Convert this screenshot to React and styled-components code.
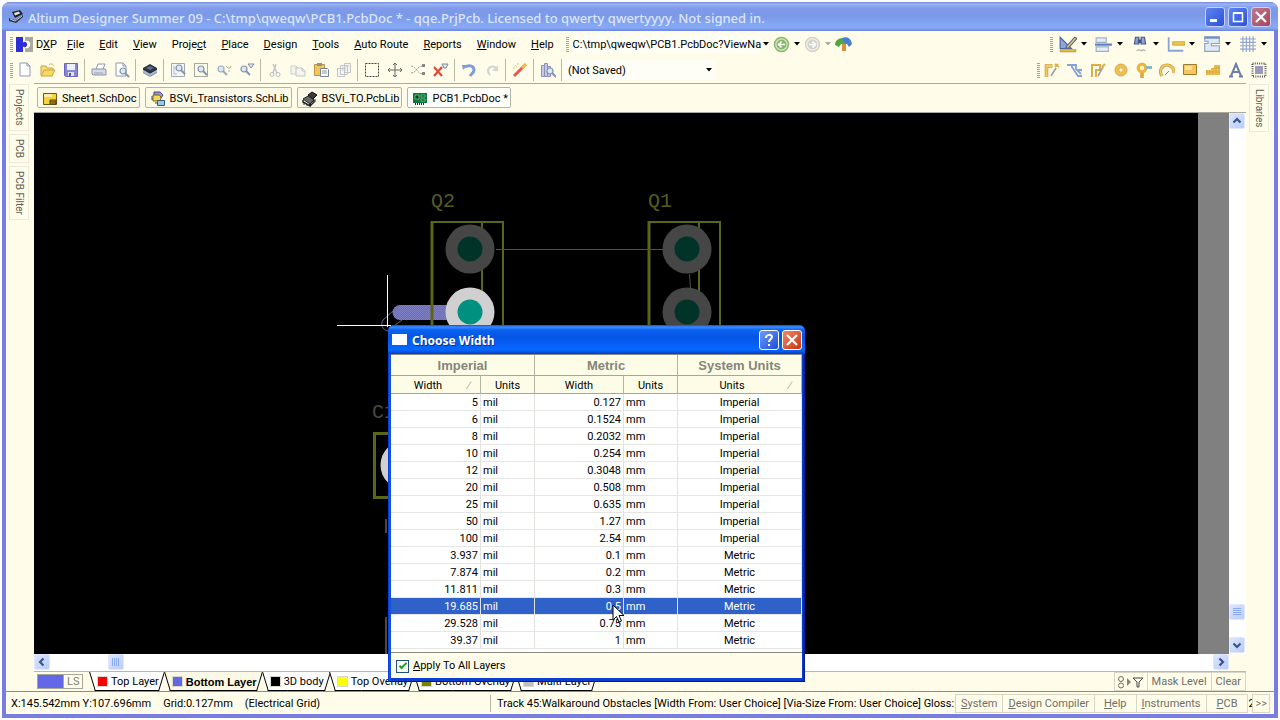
import React from "react";
import styled, { createGlobalStyle } from "styled-components";

const UI = `Roboto, "Liberation Sans", sans-serif`;
const BOLD = `"Liberation Sans", Arial, sans-serif`;
const TITLE = `"Noto Sans", "Open Sans", sans-serif`;

const Global = createGlobalStyle`
  *, *::before, *::after { box-sizing: border-box; }
  html, body { margin: 0; background: #fff; }
  body { font: 11px/14px ${UI}; color: #000; overflow: hidden; }
  button, input, select { font: inherit; color: inherit; margin: 0; padding: 0; border: 0; background: none; border-radius: 0; }
  svg { display: block; flex: none; }
`;

/* ---------- shell ---------- */
const Shell = styled.div`
  min-height: 100vh;
  padding: 2px;
  display: flex;
  flex-direction: column;
  position: relative;
`;
const Frame = styled.div`
  flex: 1;
  display: flex;
  flex-direction: column;
  background: #7a7de0;
  border-radius: 8px 8px 0 0;
  padding: 0 4px 4px;
  overflow: hidden;
`;
const TitleBar = styled.header`
  height: 29px;
  margin: 0 -4px;
  padding: 0 7px 0 6px;
  display: flex;
  align-items: center;
  gap: 4px;
  background: linear-gradient(#6f86d6 0, #9cb4f4 2px, #7f9bea 6px, #7b99e8 14px, #84a6f4 22px, #86a9f6 26px, #6c82d8 29px);
  color: #dce6fa;
`;
const TitleText = styled.h1`
  margin: 0;
  flex: 1;
  padding-top: 2px;
  font: 500 13px/18px ${TITLE};
  white-space: nowrap;
`;
const CaptionButton = styled.button`
  width: 20px;
  height: 20px;
  border: 1px solid ${(p) => (p.$bright ? "#fff" : "#c6d2f8")};
  border-radius: 3px;
  background: ${(p) => p.$bg};
  display: grid;
  place-items: center;
`;
const Caption = styled.div`
  display: flex;
  gap: 3px;
`;
const Body = styled.div`
  flex: 1;
  display: flex;
  flex-direction: column;
  background: #fffde9;
  min-height: 0;
`;

/* ---------- bars ---------- */
const Bar = styled.div`
  height: 26px;
  display: flex;
  align-items: center;
  padding: 0 ${(p) => p.$end}px 0 4px;
`;
const Handle = styled.span`
  width: 3px;
  height: 15px;
  flex: none;
  background: repeating-linear-gradient(#a5a596 0 1px, transparent 1px 2px);
`;
const Spacer = styled.span`
  flex: 1;
`;
const DxpMark = styled.span`
  margin-left: 3px;
`;
const MenuItem = styled.button`
  padding: 2px 8px 0 7px;
  height: 20px;
  white-space: nowrap;
  &:first-of-type { padding: 2px 3px 0 3px; }
`;
const Address = styled.input`
  width: 188px;
  height: 18px;
  margin-left: 4px;
  padding-top: 1px;
  background: #fffef4;
`;
const IconButton = styled.button`
  width: 23px;
  height: 22px;
  display: grid;
  place-items: center;
`;
const NavButton = styled(IconButton)`
  width: ${(p) => (p.$arrow ? "11px" : "20px")};
`;
const DropButton = styled.button`
  width: 36px;
  height: 22px;
  display: flex;
  align-items: center;
  justify-content: space-between;
  padding: 0 5px 0 3px;
`;
const Sep = styled.span`
  width: 1px;
  height: 22px;
  margin: 0 2px;
  background: #b9b9a8;
`;
const Combo = styled.label`
  display: flex;
  align-items: center;
  width: 152px;
  height: 20px;
  padding-right: 4px;
  background: #fffef6;
`;
const Select = styled.select`
  appearance: none;
  flex: 1;
  height: 20px;
  padding: 2px 0 0 4px;
  outline: none;
`;
const Hidden = styled.span`
  position: absolute;
  width: 1px;
  height: 1px;
  overflow: hidden;
  clip-path: inset(50%);
`;

/* ---------- workspace ---------- */
const Work = styled.div`
  flex: 1;
  display: flex;
  min-height: 0;
`;
const Side = styled.nav`
  width: 28px;
  flex: none;
  padding: 1px 0 0 3px;
  display: flex;
  flex-direction: column;
  align-items: flex-start;
  gap: 3px;
`;
const SideTab = styled.button`
  writing-mode: vertical-rl;
  width: 20px;
  padding: 4px 0;
  border: 1px solid #eceadb;
  color: #5f5f5a;
  font: 10px/18px ${UI};
`;
const Center = styled.div`
  flex: 1;
  min-width: 0;
  display: flex;
  flex-direction: column;
  border-top: 1px solid #a9a99c;
`;
const DocTabs = styled.div`
  height: 29px;
  padding: 3px 3px 4px;
  display: flex;
  gap: 5px;
  border-bottom: 1px solid #a9a99c;
`;
const DocTab = styled.button`
  display: flex;
  align-items: center;
  gap: 4px;
  padding: 2px 2px 0 4px;
  border: 1px solid #b4b4a4;
  border-radius: 2px;
  background: ${(p) => (p.$active ? "#fffffb" : "#fcfae6")};
  white-space: nowrap;
`;
const ViewRow = styled.div`
  flex: 1;
  display: flex;
  min-height: 0;
`;
const Canvas = styled.div`
  flex: 1;
  position: relative;
  overflow: hidden;
  background: #000;
  border-right: 31px solid #808080;
`;
const Drawing = styled.svg`
  position: absolute;
  inset: 0;
  width: 100%;
  height: 100%;
`;
const VScroll = styled.div`
  width: 17px;
  padding-bottom: 1px;
  background: #fff;
  display: flex;
  flex-direction: column;
`;
const HScroll = styled.div`
  height: 17px;
  margin-right: 17px;
  background: #fff;
  display: flex;
`;
const ScrollButton = styled.button`
  width: 16px;
  height: 16px;
  flex: none;
  border: 1px solid #dfe8fb;
  border-radius: 2px;
  background: linear-gradient(135deg, #dbe6ff, #b9cdf9);
  display: grid;
  place-items: center;
`;
const Gap = styled.span`
  flex: ${(p) => p.$grow || "none"};
  flex-basis: ${(p) => p.$size || "0px"};
`;

/* ---------- layer strip ---------- */
const LayerStrip = styled.div`
  height: 20px;
  display: flex;
  align-items: flex-start;
  padding-left: 3px;
  border-top: 1px solid #aebaba;
`;
const LayerSet = styled.button`
  display: flex;
  width: 46px;
  height: 15px;
  margin: 2px 9px 0 0;
  border: 1px solid #a8a898;
  color: #808078;
  line-height: 14px;
`;
const SetColor = styled.span`
  width: 26px;
  height: 13px;
  background: #6268e6;
  border-right: 1px solid #a8a898;
  margin-right: 3px;
`;
const LayerTab = styled.button`
  position: relative;
  height: 19px;
  display: flex;
  align-items: center;
  gap: 4px;
  padding: 0 4px 0 6px;
  margin-right: 4px;
  white-space: nowrap;
  font: ${(p) => (p.$active ? `700 11px/14px ${BOLD}` : "inherit")};
  &::before, &::after {
    content: "";
    position: absolute;
    top: 0;
    bottom: 0;
    background: ${(p) => (p.$active ? "#fbf9e6" : "#fff")};
    border-bottom: 1px solid #000;
  }
  &::before { left: 0; right: 50%; border-left: 1px solid #000; transform: skewX(17deg); }
  &::after { right: 0; left: 40%; border-right: 1px solid #000; transform: skewX(-17deg); }
`;
const Swatch = styled.span`
  position: relative;
  z-index: 1;
  width: 9px;
  height: 9px;
  background: ${(p) => p.$c};
  outline: 1px solid #d8d8cc;
`;
const TabLabel = styled.span`
  position: relative;
  z-index: 1;
`;
const MaskGroup = styled.div`
  display: flex;
  height: 19px;
`;
const FlatButton = styled.button`
  height: 19px;
  padding: 1px ${(p) => p.$pad || 4}px 0;
  border: 1px solid #d9d7c4;
  margin-left: -1px;
  color: #6f6f68;
  white-space: nowrap;
  display: flex;
  align-items: center;
`;

/* ---------- status ---------- */
const Status = styled.footer`
  height: 23px;
  border-top: 1px solid #8c8c82;
  display: flex;
  align-items: center;
  padding: 1px 4px 0 5px;
  white-space: nowrap;
`;
const StatusLeft = styled.div`
  width: 480px;
  height: 17px;
  line-height: 17px;
  display: flex;
  gap: 12px;
  border-right: 1px solid #b4b4a4;
`;
const StatusText = styled.div`
  flex: 1;
  min-width: 0;
  padding-left: 6px;
  overflow: hidden;
`;
const Sliver = styled.span`
  width: 5px;
  overflow: hidden;
`;

/* ---------- dialog ---------- */
const Dialog = styled.section`
  position: absolute;
  z-index: 2;
  left: 388px;
  top: 325px;
  width: 417px;
  padding: 0 3px 3px;
  border-radius: 6px 6px 0 0;
  background: linear-gradient(90deg, #0831d9, #1660e8 2px, #0a3fd0 3px, #0a3fd0 calc(100% - 3px), #0b35c8 calc(100% - 2px), #00138c);
  border-bottom: 1px solid #00138c;
`;
const DialogBar = styled.div`
  height: 29px;
  margin: 0 -3px;
  padding: 0 3px 0 4px;
  border-radius: 6px 6px 0 0;
  display: flex;
  align-items: center;
  background: linear-gradient(#0a4fd8 0, #3c8cff 2px, #0a62f0 5px, #0455e4 12px, #0560f8 20px, #0668ff 25px, #023ec4 29px);
  color: #fff;
`;
const DialogIcon = styled.span`
  width: 15px;
  height: 11px;
  background: #fff;
  margin-right: 5px;
`;
const DialogTitle = styled.h2`
  margin: 0;
  flex: 1;
  padding-top: 2px;
  font: 700 12px/18px ${TITLE};
  text-shadow: 1px 1px 0 #0a2f90;
`;
const DialogBody = styled.div`
  background: #fffde9;
`;
const Grid = styled.table`
  width: 100%;
  table-layout: fixed;
  border-collapse: separate;
  border-spacing: 0;
  background: #fff;
  border: 1px solid #8a8a80;
  border-width: 1px 0;
  padding-bottom: 3px;
`;
const GroupHead = styled.th`
  height: 21px;
  padding: 0;
  background: #fdfce6;
  color: #85857a;
  font: 700 13px/19px ${BOLD};
  border-right: 1px solid #b4b4a6;
  border-bottom: 1px solid #a6a69a;
`;
const ColHead = styled.th`
  position: relative;
  height: 18px;
  padding: 2px ${(p) => (p.$sort ? "15px" : "0")} 0 0;
  background: #fdfce6;
  font-weight: 400;
  border-right: 1px solid #b4b4a6;
  border-bottom: 1px solid #a6a69a;
`;
const SortMark = styled.span`
  position: absolute;
  right: 10px;
  color: #a6a69a;
`;
const Row = styled.tr`
  background: ${(p) => (p.$on ? "#2f62c8" : "#fff")};
  color: ${(p) => (p.$on ? "#fff" : "#000")};
`;
const Cell = styled.td`
  height: 17px;
  padding: 2px 2px 0;
  line-height: 14px;
  text-align: ${(p) => p.$a};
  border-right: 1px solid #e2e2de;
  border-bottom: 1px solid #e6e6e2;
`;
const DialogFoot = styled.label`
  height: 25px;
  display: flex;
  align-items: center;
  padding: 1px 0 0 5px;
  gap: 4px;
`;
const Check = styled.input`
  appearance: none;
  width: 13px;
  height: 13px;
  border: 1px solid #1c5180;
  background: #fbfbf6;
  display: grid;
  place-items: center;
  &:checked::before {
    content: "";
    width: 8px;
    height: 4px;
    margin-top: -2px;
    border: solid #21a121;
    border-width: 0 0 2px 2px;
    transform: rotate(-45deg);
  }
`;
const Pointer = styled.svg`
  position: absolute;
  z-index: 3;
  left: 612px;
  top: 604px;
`;

/* ---------- icons ---------- */
const S = ({ children, w = 18, label }) => (
  <svg width={w} height={w} viewBox="0 0 16 16" fill="none" strokeWidth="1" aria-hidden={!label}>
    {children}
  </svg>
);
const Page = ({ x = 2, y = 1, w = 10, h = 13, f = "#fff", s = "#8d99b5" }) => (
  <path d={`M${x} ${y}h${w - 3}l3 3v${h - 3}h${-w}z M${x + w - 3} ${y}v3h3`} fill={f} stroke={s} />
);
const Lens = ({ x = 8, y = 7, r = 3, c = "#8494aa" }) => (
  <>
    <circle cx={x} cy={y} r={r} fill="#dbe9f4" stroke={c} strokeWidth="1.2" />
    <path d={`M${x + r - 1} ${y + r - 1}l4 4`} stroke={c} strokeWidth="2" />
  </>
);
const icons = {
  new: <Page x={3} />,
  open: (<><path d="M1 13V4h5l1 2h6v2" fill="#f7dd84" stroke="#c4a64a" /><path d="M1 14l3-6h11l-3 6z" fill="#f9d95e" stroke="#c4a64a" /><path d="M9 3c2-2 4-1 5 1" stroke="#c9b060" /></>),
  save: (<><path d="M1.5 1.5h13v13h-12l-1-1z" fill="#8a87d4" stroke="#6a66b8" /><path d="M4 2h8v6H4z" fill="#eef0fc" /><path d="M5 10h6v4H5z" fill="#dfe2f5" /><path d="M6 11h2v3H6z" fill="#5a56ae" /></>),
  print: (<><path d="M5 7l2-5h7l-2 5" fill="#fff" stroke="#8c94a6" /><path d="M1 7h13l1 1v5H2l-1-1z" fill="#d5dae4" stroke="#8a92a4" /><path d="M3 11h9" stroke="#9aa2b2" /></>),
  preview: (<><Page x={2} /><Lens x={9} y={9} /></>),
  layers: (<><path d="M1 9l7 4 7-4v2l-7 4-7-4z" fill="#7f93ac" /><path d="M1 6l7-4 7 4v2l-7 4-7-4z" fill="#2c3442" /><path d="M4 6l4-2 4 2-4 2z" fill="#5f7088" /><path d="M1 8v2l7 4 7-4V8l-7 4z" fill="#a3bad2" /></>),
  zoomDoc: (<><path d="M1.5 1.5h13v13h-13z" fill="#f4f6fa" stroke="#a0a8b6" /><Lens x={9} y={6} /><path d="M4 4v8h3" stroke="#b0b8c8" /></>),
  zoomArea: (<><path d="M1.5 1.5h13v13h-13z" stroke="#555" strokeDasharray="1 1" /><Lens x={8} y={7} /></>),
  zoomSel: (<><Lens x={5} y={7} c="#9aa9bf" /><path d="M12 6h2M12 9h2M10 4l2 2M15 4l-1 2" stroke="#a7b58b" /></>),
  zoomFilter: (<><Lens x={5} y={7} /><path d="M9 2h6l-3 4z" fill="#e9eef4" stroke="#7c8798" /></>),
  cut: (<><path d="M9 2L6 11M6 2l4 9" stroke="#bfc2c8" strokeWidth="1.4" /><circle cx="5" cy="12.5" r="2" stroke="#b7bac2" /><circle cx="11" cy="12.5" r="2" stroke="#b7bac2" /></>),
  copy: (<><Page x={1} y={4} w={8} h={8} f="#f6f5ec" s="#cccdcc" /><Page x={6} y={6} w={9} h={8} f="#f6f5ec" s="#c2c4c8" /></>),
  paste: (<><path d="M1.5 2.5h10v11h-10z" fill="#f1c75a" stroke="#b8954a" /><path d="M4 1h5v3H4z" fill="#8f8f96" /><path d="M7.5 6.5h7l1 1v7h-8z" fill="#fff" stroke="#7b8395" /><path d="M9 9h5M9 11h5" stroke="#8c94a6" /></>),
  rubber: (<><path d="M1.5 6.5h7v8h-7zM4.5 3.5h7v9h-7zM8.5 1.5h6v9h-6z" fill="#f6f5ec" stroke="#c2c4c8" /><path d="M6 6h4M6 8h4M10 4h3" stroke="#c4c7ce" /></>),
  select: <path d="M1.5 1.5h13v13h-13z" stroke="#444" strokeDasharray="2 1" />,
  move: <path d="M8 1v14M1 8h14M6 3l2-2 2 2M6 13l2 2 2-2M3 6L1 8l2 2M13 6l2 2-2 2" stroke="#666" />,
  deselect: (<><path d="M1 11c6 0 5-7 12-7M1 4c5 0 6 8 12 8" stroke="#999" strokeDasharray="2 1" /><path d="M12 2h3v3h-3zM12 10h3v3h-3z" fill="#888" /></>),
  clear: (<><path d="M1 5l8 9M9 5l-8 9" stroke="#e04a3c" strokeWidth="2.2" /><path d="M9 2h6l-2 4h-2z" fill="#dde5ee" stroke="#7c8798" /></>),
  undo: (<><path d="M1 3l6 0-5 5z" fill="#7f9cdc" /><path d="M4 5c3-2 9-2 9 3 0 3-3 4-4 6" stroke="#7f9cdc" strokeWidth="3" /></>),
  redo: (<><path d="M14 3v6H8z" fill="#d4d5d4" /><path d="M12 6C9 3 4 5 4 9c0 2 1 3 2 4" stroke="#cfd0d2" strokeWidth="2" /></>),
  wand: (<><path d="M2 14L11 5" stroke="#e8584a" strokeWidth="3" /><path d="M10 6l4-4" stroke="#f2b84e" strokeWidth="3.4" /><path d="M3 3l2 2M6 1v2M1 6h2" stroke="#e9c87c" /></>),
  browse: (<><path d="M1.5 3.5h3v11h-3zM4.5 1.5h3v13h-3zM7.5 4.5h3v10h-3z" fill="#c4c8e6" stroke="#8c92bc" /><Lens x={10} y={9} /></>),
  draft: (<><path d="M1 2l10 10H1z" fill="#8ba6dc" stroke="#4a68a8" /><path d="M6 11l8-9 2 1-8 9z" fill="#d8c9a0" stroke="#666" /><path d="M1 13h14v2H1z" fill="#edc04a" stroke="#a9842c" strokeWidth=".6" /></>),
  align: (<><path d="M1 2.5h9v4H1zM1 10.5h11v4H1z" fill="#e6edf7" stroke="#9db0cc" /><path d="M0 8.5h15" stroke="#5f82c0" strokeWidth="2" /></>),
  find: (<><path d="M3 8l1-6h3v6zM9 8V2h3l1 6z" fill="#8fa4d0" stroke="#40568a" /><path d="M6 4h3v3H6z" fill="#40568a" /><path d="M5 14l2-1 2 1 2-1 2 1" stroke="#b0b0a4" /></>),
  dim: (<><path d="M1.5 2v12h13" stroke="#8aa4d8" strokeWidth="1.6" /><path d="M5 6h11v3H5z" fill="#f2c84c" stroke="#b08a2c" strokeWidth=".6" /></>),
  room: (<><path d="M1.5 2.5h13v5h-7v2h7v5h-13v-7h3v-2h-3z" fill="#dfe8f5" stroke="#8aa2cc" /><path d="M1 2h14" stroke="#6f8fc8" strokeWidth="2" /></>),
  grid: <path d="M1 3.5h14M1 6.5h14M1 9.5h14M1 12.5h14M3.5 1v14M6.5 1v14M9.5 1v14M12.5 1v14" stroke="#8ea4d4" />,
  route: (<><path d="M2.5 15V4h6" stroke="#c79c3c" strokeWidth="3.6" /><path d="M2.5 15V4h6" stroke="#f5ca66" strokeWidth="2" /><path d="M7 14l5-8" stroke="#9aa0a8" strokeWidth="1.6" /><path d="M11 5l3-3M11 2l4 3" stroke="#e0b048" strokeWidth="2" /></>),
  diff: <path d="M0 3h9v4l5 5M5 3v2l6 9h4M9 8h6" stroke="#86a0d8" strokeWidth="1.8" />,
  multi: (<><path d="M2 15V3h8v5H6v7" stroke="#dcae4a" strokeWidth="2" /><path d="M8 14l5-9" stroke="#9aa0a8" strokeWidth="1.6" /><path d="M12 5l3-3" stroke="#e0b048" strokeWidth="2.4" /></>),
  pad: (<><circle cx="8" cy="8" r="4.2" fill="#fff8dc" stroke="#f2c04a" strokeWidth="3.4" /><circle cx="8" cy="8" r="6" stroke="#c79c3c" strokeWidth=".8" /><circle cx="8" cy="8" r="2.2" stroke="#c79c3c" strokeWidth=".8" /></>),
  via: (<><path d="M6 9v7" stroke="#d8a63c" strokeWidth="3.6" /><circle cx="6" cy="6" r="3.8" fill="#fff3c4" stroke="#eab63e" strokeWidth="3.2" /><path d="M10 4h6v3h-6z" fill="#8fb4c4" /></>),
  arc: (<><path d="M3 14C-2 6 7-1 14 6l1 5" stroke="#c79c3c" strokeWidth="3.2" /><path d="M3 14C-2 6 7-1 14 6l1 5" stroke="#f5ca66" strokeWidth="1.8" /><path d="M6 13l4-4" stroke="#8c8c80" /></>),
  fill: (<><path d="M1.5 2.5h13v10h-13z" fill="#f6c65a" stroke="#a07828" /><path d="M3 4h7v4H3z" fill="#fbe0a0" /></>),
  polygon: (<><path d="M1 13V8h5V6h3V3h6v10z" fill="#f2c050" /><path d="M2 8v5M5 8v5M8 6v7M11 3v10M14 3v10M1 10h14M8 6h7" stroke="#c79c3c" strokeWidth=".6" /></>),
  text: <path d="M3 14L8 2l5 12M5 10h6M1 14.5h4M11 14.5h4" stroke="#6c7ea8" strokeWidth="2" />,
  comp: (<><path d="M4 4h8v8H4z" fill="#9a98be" /><path d="M1.5 1.5h13v13h-13z" stroke="#555" strokeWidth="2" strokeDasharray="1 1.2" /></>),
  sheet: (<><path d="M1.5 2.5h13v11h-13z" fill="#f6d23c" stroke="#6e5a14" /><path d="M2 3h8v3H2z" fill="#fdf0a0" /><path d="M8 9h6v4H8zM8 11h6" fill="#c89a1c" stroke="#4e400c" /></>),
  schlib: (<><path d="M4 1h6l3 3-2 3H4z" fill="#9a94d8" stroke="#4a478c" /><path d="M3 4h5c4 0 4 6 0 6H3z" fill="#f8d858" stroke="#7c6414" /><path d="M7.5 9.5h7v5h-7z" fill="#9cc8e4" stroke="#2f6080" /><path d="M1 6h2M1 8h2M5 12h2" stroke="#444" /></>),
  pcblib: (<><path d="M6 4l4-3 5 3-4 4z" fill="#3a3a3a" stroke="#111" /><path d="M1 8l5-3 6 4-4 4z" fill="#6a6a6a" stroke="#222" /><path d="M1 9v2l7 4v-2M8 15l4-4V9" stroke="#222" strokeWidth="1.5" /><path d="M2 12v2M5 13v2M13 8v3" stroke="#333" /></>),
  pcb: (<><path d="M1 2h14v10H1z" fill="#0e7a3a" /><path d="M3 4h4v4H3zM9 4h4v2H9zM9 8h4v2H9z" fill="#0a3c22" stroke="#7fd89a" strokeWidth=".7" /><path d="M3 13h10" stroke="#0a3c22" strokeWidth="2" strokeDasharray="1 1" /></>),
};
const Arrow = ({ c = "#000" }) => (
  <svg width="6" height="4" viewBox="0 0 6 4" aria-hidden="true"><path d="M0 0h6L3 3.5z" fill={c} /></svg>
);
const Chevron = ({ r = 0 }) => (
  <svg width="10" height="10" viewBox="0 0 10 10" aria-hidden="true">
    <path d="M1.5 6.5L5 3l3.5 3.5" fill="none" stroke="#3c5488" strokeWidth="2.2" transform={`rotate(${r} 5 5)`} />
  </svg>
);
const AppIcon = () => (
  <svg width="16" height="16" viewBox="0 0 16 16" aria-hidden="true">
    <path d="M4 3l8-2 3 4-8 4z" fill="#222" /><path d="M6 4l5-1.5 1 2-5 2z" fill="#e8e4dc" />
    <path d="M1 9l6 2 8-5v2l-7 6-7-2z" fill="#30343c" /><path d="M2 10l5 2 7-5" stroke="#c8d0dc" fill="none" />
  </svg>
);
const DxpIcon = () => (
  <svg width="17" height="15" viewBox="0 0 17 15" aria-hidden="true">
    <path d="M9 0h8v15H9z" fill="#a8aaa2" />
    <path d="M7 0h2v4a3.8 3.8 0 1 1 0 7v4H7z" fill="#fffde9" />
    <path d="M0 0h7v5.500a2.600 2.600 0 1 1 0 4V15H0z" fill="#2b2fd8" />
  </svg>
);
const NavCircle = ({ c, a, flip }) => (
  <svg width="17" height="17" viewBox="0 0 17 17" aria-hidden="true">
    <circle cx="8.5" cy="8.5" r="7" fill={c} stroke={a} strokeWidth="1.5" />
    <circle cx="8.5" cy="8.5" r="5" fill={a} />
    <path d="M12 8.5H6M8.5 5.5l-3 3 3 3" stroke="#fff" strokeWidth="1.6" fill="none" transform={flip ? "rotate(180 8.5 8.5)" : undefined} />
  </svg>
);
const Palm = () => (
  <svg width="18" height="16" viewBox="0 0 18 16" aria-hidden="true">
    <path d="M7 7h4v8H7z" fill="#d8923c" /><path d="M0 9c0-4 3-7 8-7l3 5-5 1-2 3z" fill="#4fa83c" />
    <path d="M7 2c5-2 9 0 10 6l-3 3-2-3-3 0z" fill="#4a7fd0" />
  </svg>
);

/* ---------- data ---------- */
const Key = ({ t }) => {
  const i = t.indexOf("&");
  return i < 0 ? t : (<>{t.slice(0, i)}<u>{t[i + 1]}</u>{t.slice(i + 2)}</>);
};
const MENUS = ["D&XP", "&File", "&Edit", "&View", "Proje&ct", "&Place", "&Design", "&Tools", "&Auto Route", "&Reports", "&Window", "&Help"];
const TOOLS = ["new open save", "print preview", "layers", "zoomDoc zoomArea zoomSel zoomFilter", "cut copy paste rubber", "select move deselect clear", "undo redo", "wand", "browse"];
const DROPS = ["draft", "align", "find", "dim", "room", "grid"];
const PLACE = ["route", "diff", "multi", "pad", "via", "arc", "fill", "polygon", "text", "comp"];
const DOCS = [["sheet", "Sheet1.SchDoc"], ["schlib", "BSVi_Transistors.SchLib"], ["pcblib", "BSVi_TO.PcbLib"], ["pcb", "PCB1.PcbDoc *"]];
const LAYERS = [["#f00", "Top Layer"], ["#6268e0", "Bottom Layer"], ["#000", "3D body"], ["#ff0", "Top Overlay"], ["#808000", "Bottom Overlay"], ["#c0c0c0", "Multi-Layer"]];
const ROWS = [
  ["5", "0.127"], ["6", "0.1524"], ["8", "0.2032"], ["10", "0.254"], ["12", "0.3048"],
  ["20", "0.508"], ["25", "0.635"], ["50", "1.27"], ["100", "2.54"], ["3.937", "0.1"],
  ["7.874", "0.2"], ["11.811", "0.3"], ["19.685", "0.5"], ["29.528", "0.75"], ["39.37", "1"],
];
const PANELS = [["&System", 5], ["&Design Compiler", 5], ["&Help", 9], ["&Instruments", 5], ["&PCB", 10]];

const Footprint = ({ x, name, lit }) => (
  <g>
    <text x={x - 1} y="207" fill="#555c22" fontFamily="Liberation Mono, monospace" fontSize="20">{name}</text>
    <path d={`M${x + 50} 222v110`} stroke="#5c6418" strokeWidth="2" />
    <circle cx={x + 38} cy="249" r="24.5" fill="#464646" />
    <circle cx={x + 38} cy="249" r="12.5" fill="#023328" />
    <circle cx={x + 38} cy="312" r="24.5" fill={lit ? "#d0d0d0" : "#464646"} />
    <circle cx={x + 38} cy="312" r="12.5" fill={lit ? "#009080" : "#023328"} />
    <path d={`M${x} 222h71v110`} stroke="#5c6418" strokeWidth="2" fill="none" />
    <path d={`M${x} 221v111`} stroke="#5c6418" strokeWidth="3" />
  </g>
);

const Pcb = () => (
  <Drawing role="img" aria-label="PCB layout">
    <defs>
      <pattern id="hatch" width="2" height="2" patternUnits="userSpaceOnUse">
        <rect width="2" height="2" fill="#6a6ac8" /><path d="M0 0h1v1H0zM1 1h1v1H1z" fill="#7f7fc4" />
      </pattern>
    </defs>
    <g transform="translate(-34 -113)">
      <path d="M470 305h-70a7.5 7.5 0 0 0 0 15h70z" fill="url(#hatch)" />
      <path d="M394 310l-11 10a7 7 0 0 0 5 11M402 320l-8 6" stroke="#66668c" fill="none" />
      <Footprint x={432} name="Q2" lit />
      <Footprint x={649} name="Q1" />
      <path d="M496 249.5h167M689.5 274l1 15" stroke="#505050" />
      <path d="M387.5 275v52M337 325.5h54" stroke="#fff" />
      <text x="372" y="418" fill="#4a4a40" fontFamily="Liberation Mono, monospace" fontSize="20">C1</text>
      <path d="M420 433.5h-45.5v64H420" stroke="#5c6418" strokeWidth="3" fill="none" />
      <circle cx="405" cy="465" r="24.5" fill="#d0d0d0" />
      <path d="M386 519v14M386 617v40" stroke="#4a4a40" strokeWidth="2" />
    </g>
  </Drawing>
);

const Grip = ({ vertical }) => (
  <svg width="8" height="8" viewBox="0 0 8 8" aria-hidden="true">
    <path d={vertical ? "M0 .5h8M0 2.5h8M0 4.5h8M0 6.5h8" : "M.5 0v8M2.5 0v8M4.5 0v8M6.5 0v8"} stroke="#8caaf0" />
  </svg>
);

const ChooseWidth = () => (
  <Dialog role="dialog" aria-labelledby="dlg">
    <DialogBar>
      <DialogIcon />
      <DialogTitle id="dlg">Choose Width</DialogTitle>
      <Caption>
        <CaptionButton $bright $bg="linear-gradient(135deg,#6f9bf8,#1d4fd8)" aria-label="Help">
          <svg width="12" height="14" viewBox="0 0 12 14"><path d="M3 5c0-4 6-4 6-1 0 2-3 2-3 5" fill="none" stroke="#fff" strokeWidth="2" /><path d="M5 11h2v2H5z" fill="#fff" /></svg>
        </CaptionButton>
        <CaptionButton $bright $bg="linear-gradient(135deg,#f08a6c,#c8320f)" aria-label="Close">
          <svg width="12" height="12" viewBox="0 0 12 12"><path d="M1 1l10 10M11 1L1 11" stroke="#fff" strokeWidth="2.2" /></svg>
        </CaptionButton>
      </Caption>
    </DialogBar>
    <DialogBody>
      <Grid>
        <colgroup><col width="90" /><col width="54" /><col width="89" /><col width="54" /><col /></colgroup>
        <thead>
          <tr><GroupHead colSpan={2}>Imperial</GroupHead><GroupHead colSpan={2}>Metric</GroupHead><GroupHead>System Units</GroupHead></tr>
          <tr>
            <ColHead $sort>Width<SortMark>∕</SortMark></ColHead><ColHead>Units</ColHead>
            <ColHead>Width</ColHead><ColHead>Units</ColHead>
            <ColHead $sort>Units<SortMark>∕</SortMark></ColHead>
          </tr>
        </thead>
        <tbody>
          {ROWS.map(([mil, mm], i) => (
            <Row key={mil} $on={i === 12}>
              <Cell $a="right">{mil}</Cell><Cell $a="left">mil</Cell>
              <Cell $a="right">{mm}</Cell><Cell $a="left">mm</Cell>
              <Cell $a="center">{i < 9 ? "Imperial" : "Metric"}</Cell>
            </Row>
          ))}
        </tbody>
      </Grid>
      <DialogFoot><Check type="checkbox" defaultChecked /><span><Key t="&Apply To All Layers" /></span></DialogFoot>
    </DialogBody>
  </Dialog>
);

export default function App() {
  return (
    <Shell>
      <Global />
      <Frame>
        <TitleBar>
          <AppIcon />
          <TitleText>Altium Designer Summer 09 - C:\tmp\qweqw\PCB1.PcbDoc * - qqe.PrjPcb. Licensed to qwerty qwertyyyy. Not signed in.</TitleText>
          <Caption>
            <CaptionButton $bg="linear-gradient(135deg,#5c86f0,#2c50d8)" aria-label="Minimize">
              <svg width="12" height="12" viewBox="0 0 12 12"><path d="M1 8h7v3H1z" fill="#fff" /></svg>
            </CaptionButton>
            <CaptionButton $bg="linear-gradient(135deg,#5c86f0,#2c50d8)" aria-label="Maximize">
              <svg width="12" height="12" viewBox="0 0 12 12"><path d="M1.5 2v8.5h9V2M1 2h10" fill="none" stroke="#fff" strokeWidth="1.5" /><path d="M1 1h10v2H1z" fill="#fff" /></svg>
            </CaptionButton>
            <CaptionButton $bg="linear-gradient(135deg,#c07a90,#a84458)" aria-label="Close">
              <svg width="12" height="12" viewBox="0 0 12 12"><path d="M1 1l10 10M11 1L1 11" stroke="#fff" strokeWidth="2.2" /></svg>
            </CaptionButton>
          </Caption>
        </TitleBar>
        <Body>
          <Bar $end={2}>
            <Handle />
            <DxpMark><DxpIcon /></DxpMark>
            {MENUS.map((m) => <MenuItem key={m}><Key t={m} /></MenuItem>)}
            <Gap $size="4px" />
            <Handle />
            <Address aria-label="Address" defaultValue="C:\tmp\qweqw\PCB1.PcbDoc?ViewName=MainEditor" />
            <NavButton $arrow aria-label="Address list"><Arrow /></NavButton>
            <NavButton aria-label="Back"><NavCircle c="#d8e8c8" a="#86b86c" /></NavButton>
            <NavButton $arrow aria-label="Back list"><Arrow /></NavButton>
            <NavButton aria-label="Forward"><NavCircle c="#f2f2ea" a="#d2d2cc" flip /></NavButton>
            <NavButton $arrow aria-label="Forward list"><Arrow c="#a9a99c" /></NavButton>
            <NavButton aria-label="Home"><Palm /></NavButton>
            <Spacer />
            <Handle />
            <Gap $size="3px" />
            {DROPS.map((n) => <DropButton key={n} aria-label={n}><S>{icons[n]}</S><Arrow /></DropButton>)}
          </Bar>
          <Bar $end={4}>
            <Handle />
            {TOOLS.map((g) => (
              <React.Fragment key={g}>
                {g.split(" ").map((n) => <IconButton key={n} aria-label={n}><S w={16}>{icons[n]}</S></IconButton>)}
                <Sep />
              </React.Fragment>
            ))}
            <Combo>
              <Hidden>View state</Hidden>
              <Select defaultValue="n"><option value="n">(Not Saved)</option></Select>
              <Arrow />
            </Combo>
            <Spacer />
            <Handle />
            {PLACE.map((n) => <IconButton key={n} aria-label={n}><S w={16}>{icons[n]}</S></IconButton>)}
          </Bar>
          <Work>
            <Side>
              {["Projects", "PCB", "PCB Filter"].map((t) => <SideTab key={t}>{t}</SideTab>)}
            </Side>
            <Center>
              <DocTabs>
                {DOCS.map(([ic, t], i) => <DocTab key={t} $active={i === 3}><S w={16}>{icons[ic]}</S>{t}</DocTab>)}
              </DocTabs>
              <ViewRow>
                <Canvas><Pcb /></Canvas>
                <VScroll>
                  <ScrollButton aria-label="Scroll up"><Chevron /></ScrollButton>
                  <Gap $grow={1} />
                  <ScrollButton aria-label="Vertical thumb"><Grip vertical /></ScrollButton>
                  <Gap $size="17px" />
                  <ScrollButton aria-label="Scroll down"><Chevron r={180} /></ScrollButton>
                </VScroll>
              </ViewRow>
              <HScroll>
                <ScrollButton aria-label="Scroll left"><Chevron r={-90} /></ScrollButton>
                <Gap $size="58px" />
                <ScrollButton aria-label="Horizontal thumb"><Grip /></ScrollButton>
                <Gap $grow={1} />
                <ScrollButton aria-label="Scroll right"><Chevron r={90} /></ScrollButton>
              </HScroll>
              <LayerStrip>
                <LayerSet><SetColor />LS</LayerSet>
                {LAYERS.map(([c, t], i) => <LayerTab key={t} $active={i === 1}><Swatch $c={c} /><TabLabel>{t}</TabLabel></LayerTab>)}
                <Spacer />
                <MaskGroup>
                  <FlatButton $pad={2} aria-label="Filter">
                    <svg width="28" height="14" viewBox="0 0 28 14" fill="none" stroke="#6f6f58"><circle cx="4" cy="4" r="2.5" /><circle cx="4" cy="10.5" r="2.5" /><path d="M10 3v8l4-4z" fill="#85857a" stroke="none" /><path d="M16 3h10l-4 4v5h-2V7z" stroke="#444" /></svg>
                  </FlatButton>
                  <FlatButton>Mask Level</FlatButton>
                  <FlatButton>Clear</FlatButton>
                </MaskGroup>
              </LayerStrip>
            </Center>
            <Side><SideTab>Libraries</SideTab></Side>
          </Work>
          <Status>
            <StatusLeft><span>X:145.542mm Y:107.696mm</span><span>Grid:0.127mm</span><span>(Electrical Grid)</span></StatusLeft>
            <StatusText>Track 45:Walkaround Obstacles [Width From: User Choice] [Via-Size From: User Choice] Gloss: Weak</StatusText>
            {PANELS.map(([t, p]) => <FlatButton key={t} $pad={p}><span><Key t={t} /></span></FlatButton>)}
            <Sliver>2r</Sliver>
            <FlatButton $pad={2}>&gt;&gt;</FlatButton>
          </Status>
        </Body>
      </Frame>
      <ChooseWidth />
      <Pointer width="13" height="20" viewBox="0 0 13 20" aria-hidden="true">
        <path d="M1 1v15l3.5-3.5L7 18l2.5-1-2.5-5.5h5z" fill="#fff" stroke="#000" />
      </Pointer>
    </Shell>
  );
}
